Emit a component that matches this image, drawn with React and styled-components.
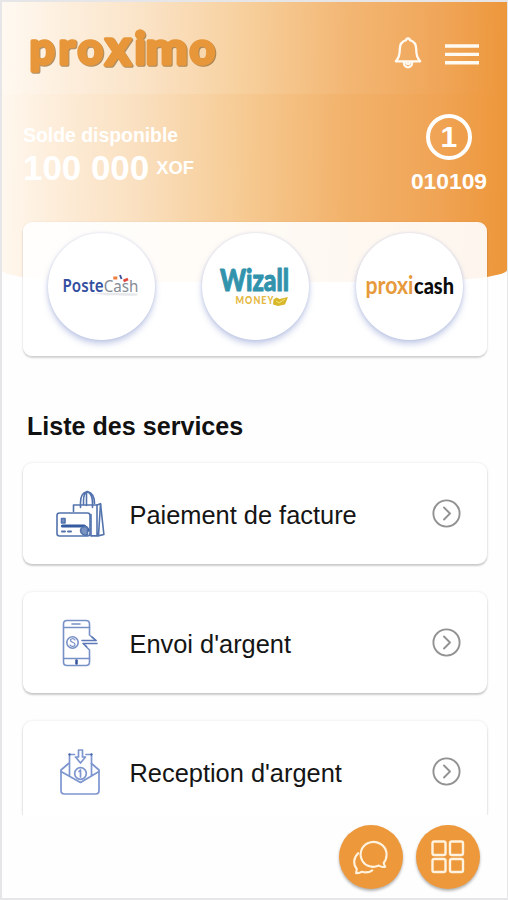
import React from "react";
import styled, { createGlobalStyle } from "styled-components";

const GlobalStyle = createGlobalStyle`
  *, *::before, *::after { box-sizing: border-box; }
  body { margin: 0; background: #fff; font-family: "Liberation Sans", Arial, sans-serif; }
  svg { display: block; flex: none; overflow: visible; }
`;

const Screen = styled.main`
  width: 508px;
  height: 900px;
  display: flex;
  flex-direction: column;
  overflow: hidden;
  background: #fefefe;
  border: solid #e6e6e8;
  border-width: 2px 1px 2px 2px;
`;

const Hero = styled.header`
  flex: none;
  height: 280px;
  border-radius: 0 0 110px 110px / 0 0 12px 12px;
  background: linear-gradient(91deg, #fff8ef 0%, #fdecd8 12%, #fae0c0 27%, #f6ca92 48%, #f2b26b 68%, #f0a455 86%, #ed9639 100%);
`;

const TopBar = styled.div`
  height: 92px;
  display: flex;
  align-items: flex-start;
  padding: 20px 28px 0 24px;
  background: linear-gradient(90deg, rgba(255, 255, 255, 0.18), rgba(255, 255, 255, 0));
`;

const TopActions = styled.nav`
  display: flex;
  gap: 23px;
  margin: 14px 0 0 auto;
`;

const PlainButton = styled.button`
  display: flex;
  padding: 0;
  border: 0;
  background: none;
`;

const Account = styled.section`
  display: flex;
  justify-content: space-between;
  padding: 20px 20px 0 21px;
  color: #fff;
  font-weight: 700;
`;

const Balance = styled.div`
  padding-top: 10px;
`;

const BalanceLabel = styled.div`
  font-size: 19.4px;
  line-height: 22px;
`;

const BalanceAmount = styled.div`
  display: flex;
  align-items: center;
  gap: 7px;
  margin-top: 1px;
  font-size: 34.9px;
  line-height: 42px;
`;

const Currency = styled.span`
  font-size: 18.4px;
  line-height: 20px;
`;

const Agent = styled.div`
  display: flex;
  flex-direction: column;
  align-items: center;
  font-size: 22.8px;
  line-height: 26px;
`;

const AgentBadge = styled.div`
  width: 46px;
  height: 46px;
  display: grid;
  place-items: center;
  margin-bottom: 8px;
  border: 4px solid #fff;
  border-radius: 50%;
  font-size: 30px;
  line-height: 38px;
`;

const Partners = styled.section`
  flex: none;
  height: 134px;
  display: flex;
  justify-content: space-between;
  margin: -60px 20px 0 21px;
  padding: 11px 24px 0 25px;
  border-radius: 9px;
  background: rgba(255, 255, 255, 0.91);
  box-shadow: 0 2px 2px rgba(0, 0, 0, 0.17), 0 0 2px rgba(0, 0, 0, 0.08);
`;

const Partner = styled.button`
  width: 107px;
  height: 107px;
  display: grid;
  place-items: center;
  padding: 0;
  border: 0;
  border-radius: 50%;
  background: #fff;
  box-shadow: 0 4px 6px rgba(91, 116, 190, 0.35), 0 0 3px rgba(91, 116, 190, 0.22);
`;

const SectionTitle = styled.h1`
  flex: none;
  margin: 55px 0 0 25px;
  color: #111;
  font-size: 25.1px;
  line-height: 30px;
  font-weight: 700;
`;

const Services = styled.section`
  flex: none;
  height: 374px;
  display: flex;
  flex-direction: column;
  gap: 28px;
  padding: 22px 20px 0 21px;
  overflow: hidden;
`;

const Service = styled.button`
  flex: none;
  width: 100%;
  height: 101px;
  display: flex;
  align-items: center;
  padding: 0 26px 0 31px;
  border: 0;
  border-radius: 9px;
  background: #fff;
  color: #151515;
  font: 25.4px/30px "Liberation Sans", Arial, sans-serif;
  text-align: left;
  box-shadow: 0 2px 2px rgba(0, 0, 0, 0.18), 0 0 3px rgba(0, 0, 0, 0.11);
`;

const ServiceName = styled.span`
  flex: 1;
  padding: 2px 0 0 23.5px;
`;

const FabBar = styled.footer`
  display: flex;
  justify-content: flex-end;
  gap: 13px;
  padding: 10px 27px 0 0;
`;

const Fab = styled.button`
  width: 64px;
  height: 64px;
  display: grid;
  place-items: center;
  padding: 0;
  border: 0;
  border-radius: 50%;
  background: #ed983b;
  box-shadow: 0 2px 3px rgba(0, 0, 0, 0.3);
`;

const Wordmark = styled.svg`
  filter: drop-shadow(1px 1px 0.5px rgba(120, 80, 25, 0.6));
`;

function ProximoLogo() {
  return (
    <Wordmark width="200" height="64" viewBox="26 22 200 64" fontFamily="Lato, sans-serif" fontWeight="700" strokeLinejoin="round" strokeLinecap="round">
      <text y="64" fontSize="44.5" strokeWidth="3.4" fill="#e7973a" stroke="#e7973a">
        <tspan x="29.5">p</tspan>
        <tspan x="58.5">r</tspan>
        <tspan x="77.5">o</tspan>
        <tspan x="105" y="65" fontSize="50">x</tspan>
        <tspan x="134.5" y="64">i</tspan>
        <tspan x="145.5" textLength="42" lengthAdjust="spacingAndGlyphs">m</tspan>
        <tspan x="189.5">o</tspan>
      </text>
    </Wordmark>
  );
}

function BellIcon() {
  return (
    <svg width="28" height="34" viewBox="0 0 28 34" fill="none" stroke="#fffaf2" strokeWidth="2.3" strokeLinejoin="round" strokeLinecap="round">
      <path d="M14 2.3c-1 0-1.8.8-1.9 1.8C7.7 5.4 5.8 8.7 5.8 13c0 6-.6 8.9-4 12.300h24.400c-3.400-3.400-4-6.300-4-12.300 0-4.300-1.900-7.600-6.300-8.900C15.800 3.100 15 2.300 14 2.300Z" />
      <path d="M9.800 26.300c0 6.600 8.400 6.600 8.400 0M12.300 26.300c0 2.200 3.400 2.200 3.400 0" />
    </svg>
  );
}

function MenuIcon() {
  return (
    <svg width="34" height="34" viewBox="0 0 34 34" stroke="#fffaf2" strokeWidth="3.4">
      <path d="M0 10h34M0 18.400h34M0 26.800h34" />
    </svg>
  );
}

function PosteCashLogo() {
  return (
    <svg width="80" height="28" viewBox="61.5 272.5 80 28" fontFamily="'Noto Sans', sans-serif">
      <path d="M84 294c14-2 22-2 53-1v2c-14 1-22-1-31 0-8-2-14-2-22-1Z" fill="#e6e8eb" />
      <text x="62" y="291" fontSize="17" fontWeight="600" fill="#3450a0" textLength="76" lengthAdjust="spacingAndGlyphs">
        Poste<tspan fill="#858b94" fontWeight="400">Cash</tspan>
      </text>
      <path d="M112.800 277.500h4" stroke="#ef7d3b" strokeWidth="3" />
      <path d="m119.500 274.500 1.500 4" stroke="#4053a0" strokeWidth="2" />
      <path d="m123 280.500 4.500-2" stroke="#df493b" strokeWidth="3" />
    </svg>
  );
}

function WizallLogo() {
  return (
    <svg width="76" height="46" viewBox="217.5 263.5 76 46" strokeLinejoin="round">
      <text x="219.5" y="290.5" fontFamily="Lato, sans-serif" fontWeight="900" fontSize="30" fill="#3293ad" stroke="#3293ad" strokeWidth="1" textLength="69" lengthAdjust="spacingAndGlyphs">Wizall</text>
      <text x="235" y="303.5" fontFamily="Lato, sans-serif" fontWeight="900" fontSize="10.5" fill="#e5b83f" textLength="39" lengthAdjust="spacingAndGlyphs" letterSpacing="1.2">MONEY</text>
      <path d="m273 299 3-2 3 1.500 8.500-2-3 7.500-7 1.500-5-1.500Z" fill="#d8b72a" />
      <path d="m275.500 300.500 3 2 6-4" stroke="#f8e57a" fill="none" />
    </svg>
  );
}

function ProxicashLogo() {
  return (
    <svg width="92" height="30" viewBox="363.5 271.5 92 30" fontFamily="Lato, sans-serif" fontWeight="700" strokeLinejoin="round">
      <text x="365" y="293.5" fontSize="24" fill="#e79a3b" textLength="48" lengthAdjust="spacingAndGlyphs">proxi</text>
      <text x="413.5" y="293.5" fontSize="23" fontWeight="900" fill="#0b0b0b" textLength="40" lengthAdjust="spacingAndGlyphs">cash</text>
    </svg>
  );
}

function BagIcon() {
  return (
    <svg width="52" height="52" viewBox="54 487.5 52 52" fill="none" stroke="#5273ad" strokeWidth="1.6" strokeLinejoin="round" strokeLinecap="round">
      <path d="M73.500 511v-6.500H97l3.500-1.300 3.400 30.800-6 1.400H91" />
      <path d="M97 504.500V535M100.500 503.500l-2 31.500M91 535V514" />
      <path d="M80.500 507v-5c0-14 12-14 12 0v5M83.500 504v-3c0-7 1.500-9.500 4-10 4 1 7 5 7 12M86.500 491v14" />
      <rect x="57" y="512.5" width="33" height="23" rx="2.5" fill="#fff" />
      <path d="M62.500 525.500h21.500l4 4" stroke="#345ba0" strokeWidth="3.2" />
      <rect x="61.5" y="518" width="3.5" height="4.5" fill="#7b93c2" />
      <path d="M62 531h3M68 531h3" strokeWidth="2" />
      <path d="M80.500 530c0-3 4-5 7-3v7c-3 2-7-1-7-4Z" fill="#7b93c2" />
    </svg>
  );
}

function PhoneIcon() {
  return (
    <svg width="52" height="52" viewBox="54 616 52 52" fill="none" stroke="#7790c7" strokeWidth="1.6" strokeLinejoin="round" strokeLinecap="round">
      <path d="M89.500 634v-11q0-3.500-3.500-3.500H67q-3.500 0-3.500 3.500v38q0 3.500 3.500 3.500h19q3.500 0 3.500-3.500v-12l-4-4M89.500 634l6.500 5.500" />
      <path d="M64 626.500h25.500M64 657.500h25.500M72 623h8" />
      <path d="M76.500 659.500v3" stroke="#35549a" strokeWidth="2.5" />
      <circle cx="72.5" cy="641.5" r="5.7" />
      <path d="M75 639c-1-2-5-1.500-4.500.5.500 2 4.500 1.500 4.500 4s-4 2.500-5 .5" strokeWidth="1.2" />
      <path d="M82 639.500h14l-4-3.500M97 642.500H83l3.500 3" stroke="#5c78b7" />
    </svg>
  );
}

function EnvelopeIcon() {
  return (
    <svg width="52" height="52" viewBox="54 745.5 52 52" fill="none" stroke="#7d96cf" strokeWidth="1.7" strokeLinejoin="round" strokeLinecap="round">
      <path d="M68.500 763 61 769.500v20.500q0 3.500 3.500 3.500h31q3.500 0 3.500-3.500v-20.500l-7.500-6.500" />
      <path d="m61 771 19.500 11L99 771M69.500 775v-21h5M86 754h5.500v21" />
      <path d="M78.500 749.500h4v7h3l-5 6-5-6h3v-7Z" />
      <circle cx="80.5" cy="773" r="5.8" />
      <path d="M80.500 769.500v7M79 771l1.500-1.500" />
      <path d="M69.500 754v.1M91.500 754v.1" stroke="#4264a8" strokeWidth="2.3" />
    </svg>
  );
}

function CircleChevron() {
  return (
    <svg width="29" height="29" viewBox="0 0 29 29" fill="none" stroke="#929292" strokeWidth="1.9" strokeLinecap="round" strokeLinejoin="round">
      <circle cx="14.5" cy="14.5" r="13.1" />
      <path d="m12 8.500 6 6-6 6" />
    </svg>
  );
}

function ChatIcon() {
  return (
    <svg width="38" height="38" viewBox="352.5 838 38 38" fill="none" stroke="#fff3df" strokeWidth="2.1" strokeLinejoin="round" strokeLinecap="round">
      <path d="M385.800 866.800c-3 .6-5-.2-6.500-1.300-6.200 2.900-13 .8-16.200-4.300-4-6.300-1.600-14.700 5-17.900 8.700-4.200 18.800 1.600 19 11.300 0 3.200-1 6.100-2.900 8.300.2 1.600.7 2.800 1.600 3.900Z" />
      <path d="M358.600 853.200c-4.800 4.600-5.100 11.200-1.300 15.700l-.7 4.200c2.600.2 4.400-.4 5.900-1.400 3.600 1.200 7.300.7 10.300-1.400" />
    </svg>
  );
}

function GridIcon() {
  return (
    <svg width="34" height="34" viewBox="0 0 34 34" fill="none" stroke="#fff3df" strokeWidth="2.4">
      <rect x="1.5" y="1.5" width="13" height="13.5" rx="1.8" />
      <rect x="19" y="1.5" width="13" height="13.5" rx="1.8" />
      <rect x="1.5" y="19" width="13" height="13" rx="1.8" />
      <rect x="19" y="19" width="13" height="13" rx="1.8" />
    </svg>
  );
}

const services = [
  { name: "Paiement de facture", Icon: BagIcon },
  { name: "Envoi d'argent", Icon: PhoneIcon },
  { name: "Reception d'argent", Icon: EnvelopeIcon },
];

export default function App() {
  return (
    <>
      <GlobalStyle />
      <Screen>
        <Hero>
          <TopBar>
            <ProximoLogo />
            <TopActions>
              <PlainButton><BellIcon /></PlainButton>
              <PlainButton><MenuIcon /></PlainButton>
            </TopActions>
          </TopBar>
          <Account>
            <Balance>
              <BalanceLabel>Solde disponible</BalanceLabel>
              <BalanceAmount>100 000 <Currency>XOF</Currency></BalanceAmount>
            </Balance>
            <Agent>
              <AgentBadge>1</AgentBadge>
              010109
            </Agent>
          </Account>
        </Hero>
        <Partners>
          <Partner><PosteCashLogo /></Partner>
          <Partner><WizallLogo /></Partner>
          <Partner><ProxicashLogo /></Partner>
        </Partners>
        <SectionTitle>Liste des services</SectionTitle>
        <Services>
          {services.map(({ name, Icon }) => (
            <Service key={name}>
              <Icon />
              <ServiceName>{name}</ServiceName>
              <CircleChevron />
            </Service>
          ))}
        </Services>
        <FabBar>
          <Fab><ChatIcon /></Fab>
          <Fab><GridIcon /></Fab>
        </FabBar>
      </Screen>
    </>
  );
}
